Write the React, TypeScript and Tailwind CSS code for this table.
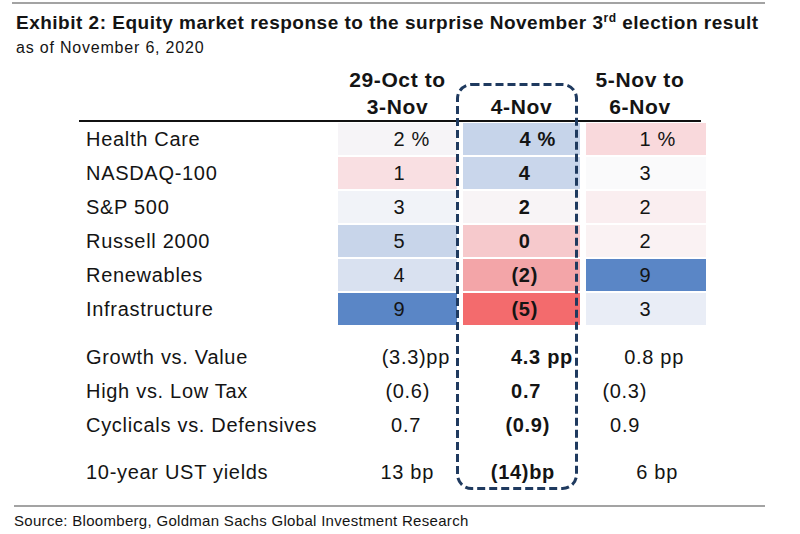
import React from "react";

type Cell = {
  text: string;
  bg: string;
  pad: string;
  ghost?: string;
  bold?: boolean;
};

type Row = { label: string; cells: Cell[] };

const sectors: Row[] = [
  {
    label: "Health Care",
    cells: [
      { text: "2 %", bg: "bg-[#f6f4f7]", pad: "pr-[27px]" },
      { text: "4 %", bg: "bg-[#c6d4ea]", pad: "pr-[24px]", bold: true },
      { text: "1 %", bg: "bg-[#f9d9dc]", pad: "pr-[30px]" },
    ],
  },
  {
    label: "NASDAQ-100",
    cells: [
      { text: "1", bg: "bg-[#f9dfe2]", pad: "pr-[27px]", ghost: " %" },
      { text: "4", bg: "bg-[#c9d6eb]", pad: "pr-[42px]", ghost: ")", bold: true },
      { text: "3", bg: "bg-[#fafafb]", pad: "pr-[30px]", ghost: " %" },
    ],
  },
  {
    label: "S&P 500",
    cells: [
      { text: "3", bg: "bg-[#f1f3f8]", pad: "pr-[27px]", ghost: " %" },
      { text: "2", bg: "bg-[#f8f4f6]", pad: "pr-[42px]", ghost: ")", bold: true },
      { text: "2", bg: "bg-[#faeef0]", pad: "pr-[30px]", ghost: " %" },
    ],
  },
  {
    label: "Russell 2000",
    cells: [
      { text: "5", bg: "bg-[#c8d5ea]", pad: "pr-[27px]", ghost: " %" },
      { text: "0", bg: "bg-[#f6c9cc]", pad: "pr-[42px]", ghost: ")", bold: true },
      { text: "2", bg: "bg-[#faf2f3]", pad: "pr-[30px]", ghost: " %" },
    ],
  },
  {
    label: "Renewables",
    cells: [
      { text: "4", bg: "bg-[#d9e1f0]", pad: "pr-[27px]", ghost: " %" },
      { text: "(2)", bg: "bg-[#f3a5a8]", pad: "pr-[42px]", bold: true },
      { text: "9", bg: "bg-[#5a86c6]", pad: "pr-[30px]", ghost: " %" },
    ],
  },
  {
    label: "Infrastructure",
    cells: [
      { text: "9", bg: "bg-[#5a86c6]", pad: "pr-[27px]", ghost: " %" },
      { text: "(5)", bg: "bg-[#f36b6d]", pad: "pr-[42px]", bold: true },
      { text: "3", bg: "bg-[#e9edf6]", pad: "pr-[30px]", ghost: " %" },
    ],
  },
];

const factors: Row[] = [
  {
    label: "Growth vs. Value",
    cells: [
      { text: "(3.3)pp", bg: "", pad: "pr-[7px]" },
      { text: "4.3 pp", bg: "", pad: "pr-[7px]", bold: true },
      { text: "0.8 pp", bg: "", pad: "pr-[22px]" },
    ],
  },
  {
    label: "High vs. Low Tax",
    cells: [
      { text: "(0.6)", bg: "", pad: "pr-[27px]" },
      { text: "0.7", bg: "", pad: "pr-[39px]", bold: true },
      { text: "(0.3)", bg: "", pad: "pr-[59px]" },
    ],
  },
  {
    label: "Cyclicals vs. Defensives",
    cells: [
      { text: "0.7", bg: "", pad: "pr-[36px]" },
      { text: "(0.9)", bg: "", pad: "pr-[30px]", bold: true },
      { text: "0.9", bg: "", pad: "pr-[66px]" },
    ],
  },
];

const yields: Row = {
  label: "10-year UST yields",
  cells: [
    { text: "13 bp", bg: "", pad: "pr-[23px]" },
    { text: "(14)bp", bg: "", pad: "pr-[25px]", bold: true },
    { text: "6 bp", bg: "", pad: "pr-[28px]" },
  ],
};

function TableRow({ row }: { row: Row }) {
  return (
    <div className="grid grid-cols-[253px_119px_117px_120px] gap-x-[6px] h-[34px] items-center">
      <div className="pl-[7px] whitespace-nowrap">{row.label}</div>
      {row.cells.map((c, i) => (
        <div
          key={i}
          className={`h-[32px] flex items-center justify-end whitespace-nowrap ${c.bg} ${c.pad} ${
            c.bold ? "font-bold" : ""
          }`}
        >
          {c.text}
          {c.ghost && <span className="invisible whitespace-pre">{c.ghost}</span>}
        </div>
      ))}
    </div>
  );
}

export default function App() {
  return (
    <div className="w-[800px] h-[534px] bg-white text-[#141414] font-['Liberation_Sans',Arial,sans-serif] overflow-hidden">
      <div className="mt-[2px] ml-[12px] w-[753px] h-[2px] bg-[#a3a3a3]" />

      <h1 className="mt-[7px] ml-[16px] text-[19px] leading-[24px] font-bold tracking-[0.5px] whitespace-nowrap">
        Exhibit 2: Equity market response to the surprise November 3
        <sup className="text-[12px] align-baseline relative -top-[7px]">rd</sup> election result
      </h1>
      <p className="mt-[3px] ml-[16px] text-[16px] leading-[20px] tracking-[0.8px]">
        as of November 6, 2020
      </p>

      <div className="relative mt-[8px] ml-[79px] w-[622px] text-[20px] tracking-[0.7px]">
        {/* header */}
        <div className="grid grid-cols-[253px_119px_117px_120px] gap-x-[6px] text-[21px] leading-[27px] font-bold tracking-[0.6px]">
          <div />
          <div className="text-center">
            29-Oct to
            <br />
            3-Nov
          </div>
          <div className="text-center">
            <br />
            4-Nov
          </div>
          <div className="text-center pr-[12px]">
            5-Nov to
            <br />
            6-Nov
          </div>
        </div>
        <div className="h-[2px] bg-[#111]" />

        {sectors.map((r) => (
          <TableRow key={r.label} row={r} />
        ))}

        <div className="mt-[14px]">
          {factors.map((r) => (
            <TableRow key={r.label} row={r} />
          ))}
        </div>

        <div className="mt-[13px]">
          <TableRow row={yields} />
        </div>

        {/* dashed highlight around the 4-Nov column */}
        <svg
          className="absolute left-[377px] top-[17px] pointer-events-none"
          width="122"
          height="407"
          viewBox="0 0 122 407"
        >
          <rect
            x="1.5"
            y="1.5"
            width="119"
            height="404"
            rx="14"
            fill="none"
            stroke="#1f3a5f"
            strokeWidth="3"
            strokeDasharray="8 4"
          />
        </svg>
      </div>

      <div className="mt-[16px] ml-[14px] w-[751px] h-[2px] bg-[#a3a3a3]" />
      <p className="mt-[4px] ml-[14px] text-[15px] leading-[20px] tracking-[0.3px] whitespace-nowrap">
        Source: Bloomberg, Goldman Sachs Global Investment Research
      </p>
    </div>
  );
}
